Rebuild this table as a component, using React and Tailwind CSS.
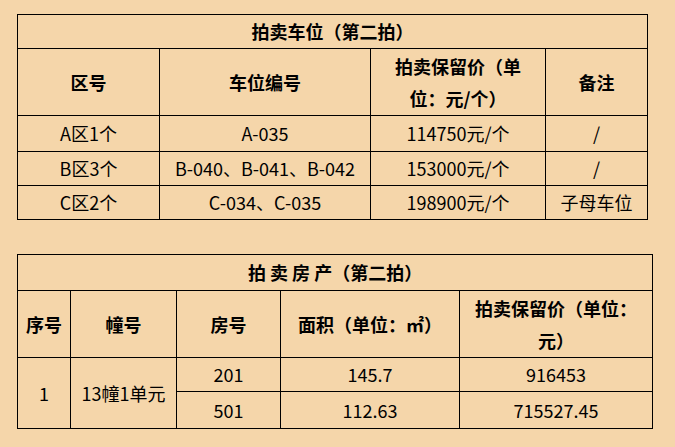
import React from "react";

const font = { fontFamily: '"Microsoft YaHei", "Noto Sans CJK SC", "Noto Sans", sans-serif' };

const cell = "border border-black text-center align-middle p-0";

export default function App() {
  const cars = [
    ["A区1个", "A-035", "114750元/个", "/", "h-[36px]"],
    ["B区3个", "B-040、B-041、B-042", "153000元/个", "/", "h-[34px]"],
    ["C区2个", "C-034、C-035", "198900元/个", "子母车位", "h-[34px]"],
  ];

  return (
    <div className="w-[675px] h-[447px] bg-[#f5d6aa] text-black text-[18px] overflow-hidden" style={font}>
      <div className="pt-[14px] pl-[17px]">
        <table className="table-fixed border-collapse w-[631px]">
          <colgroup>
            <col className="w-[142px]" />
            <col className="w-[211px]" />
            <col className="w-[175px]" />
            <col className="w-[102px]" />
          </colgroup>
          <tbody>
            <tr className="h-[34px]">
              <td colSpan={4} className={`${cell} font-bold`}>拍卖车位（第二拍）</td>
            </tr>
            <tr className="h-[67px] font-bold">
              <td className={cell}>区号</td>
              <td className={cell}>车位编号</td>
              <td className={`${cell} leading-[32px] px-4`}>拍卖保留价（单位：元/个）</td>
              <td className={cell}>备注</td>
            </tr>
            {cars.map((r) => (
              <tr key={r[0]} className={r[4]}>
                <td className={cell}>{r[0]}</td>
                <td className={cell}>{r[1]}</td>
                <td className={cell}>{r[2]}</td>
                <td className={cell}>{r[3]}</td>
              </tr>
            ))}
          </tbody>
        </table>

        <table className="table-fixed border-collapse w-[636px] mt-[34px]">
          <colgroup>
            <col className="w-[53px]" />
            <col className="w-[106px]" />
            <col className="w-[104px]" />
            <col className="w-[179px]" />
            <col className="w-[193px]" />
          </colgroup>
          <tbody>
            <tr className="h-[36px]">
              <td colSpan={5} className={`${cell} font-bold`}>拍 卖 房 产（第二拍）</td>
            </tr>
            <tr className="h-[67px] font-bold">
              <td className={cell}>序号</td>
              <td className={cell}>幢号</td>
              <td className={cell}>房号</td>
              <td className={cell}>面积（单位：㎡）</td>
              <td className={`${cell} leading-[32px] px-3`}>拍卖保留价（单位：元）</td>
            </tr>
            <tr className="h-[34px]">
              <td rowSpan={2} className={cell}>1</td>
              <td rowSpan={2} className={cell}>13幢1单元</td>
              <td className={cell}>201</td>
              <td className={cell}>145.7</td>
              <td className={cell}>916453</td>
            </tr>
            <tr className="h-[37px]">
              <td className={cell}>501</td>
              <td className={cell}>112.63</td>
              <td className={cell}>715527.45</td>
            </tr>
          </tbody>
        </table>
      </div>
    </div>
  );
}
